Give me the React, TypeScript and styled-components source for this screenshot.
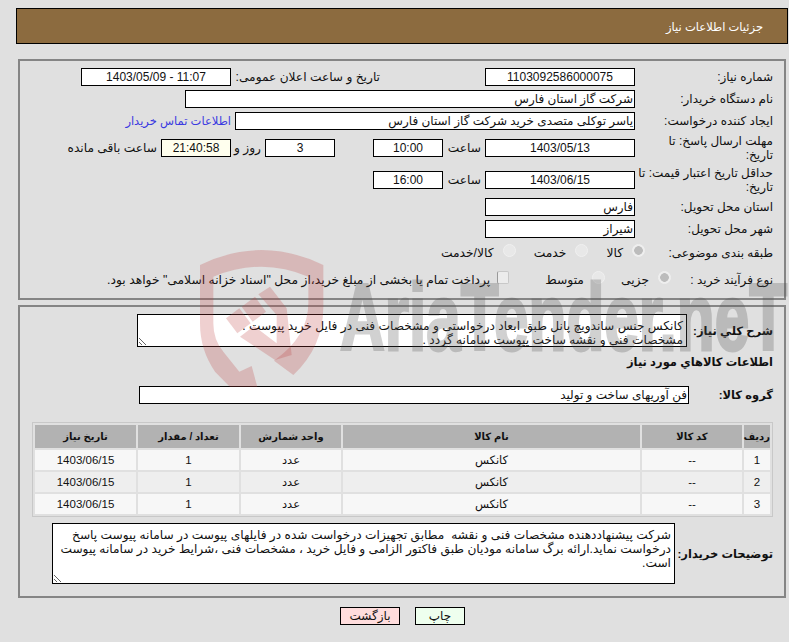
import styled, { createGlobalStyle } from "styled-components";

const GlobalStyle = createGlobalStyle`
  html, body {
    margin: 0;
    padding: 0;
    background: #e0e0e0;
    overflow: hidden;
  }
  body {
    font-family: "Liberation Sans", "DejaVu Sans", sans-serif;
    font-size: 12px;
    color: #111;
  }
`;

const Page = styled.div`
  position: relative;
  width: 789px;
  height: 642px;
  box-sizing: border-box;
  padding: 8px 1px 0 16px;
  overflow: hidden;
  direction: rtl;
`;
const TitleBar = styled.div`
  height: 36px;
  box-sizing: border-box;
  border: 1px solid #000;
  background: #8c6b3f;
  color: #fff;
  font-size: 11.5px;
  line-height: 36px;
  padding-right: 24px;
`;
const Panel = styled.section<{ $top: number; $h: number }>`
  margin: ${(p) => p.$top}px 2px 0;
  height: ${(p) => p.$h}px;
  box-sizing: border-box;
  border: 2px solid #858585;
  padding: 7px 11px 0 0;
`;
const Row = styled.div<{ $h?: number; $top?: number }>`
  display: flex;
  align-items: center;
  height: ${(p) => p.$h ?? 18}px;
  margin-top: ${(p) => p.$top ?? 4}px;
`;
const Label = styled.div<{ $w: number; $bold?: boolean }>`
  width: ${(p) => p.$w}px;
  flex: none;
  line-height: 14px;
  font-size: ${(p) => (p.$bold ? 11.5 : 12)}px;
  font-weight: ${(p) => (p.$bold ? 700 : 400)};
`;
const Field = styled.div<{ $w: number; $center?: boolean; $tint?: boolean; $mr?: number }>`
  width: ${(p) => p.$w}px;
  height: 18px;
  flex: none;
  box-sizing: border-box;
  border: 1px solid #000;
  background: ${(p) => (p.$tint ? "#ffffee" : "#fff")};
  margin-right: ${(p) => p.$mr ?? 0}px;
  padding: 0 1px;
  line-height: 16px;
  font-size: 12px;
  direction: ${(p) => (p.$center ? "ltr" : "rtl")};
  text-align: ${(p) => (p.$center ? "center" : "right")};
`;
const Caption = styled.div<{ $w?: number; $mr?: number }>`
  width: ${(p) => (p.$w ? `${p.$w}px` : "auto")};
  flex: none;
  box-sizing: border-box;
  margin-right: ${(p) => p.$mr ?? 0}px;
  padding-right: 4px;
  font-size: 12.2px;
  white-space: nowrap;
`;
const BuyerLink = styled.a`
  padding-right: 4px;
  font-size: 11.5px;
  color: #3a3ae0;
  text-decoration: none;
`;
const Options = styled.div<{ $gap?: number }>`
  display: flex;
  align-items: center;
  gap: ${(p) => p.$gap ?? 18}px;
`;
const Option = styled.label<{ $gap?: number; $after?: number }>`
  display: flex;
  align-items: center;
  gap: ${(p) => p.$gap ?? 9}px;
  margin-left: ${(p) => p.$after ?? 0}px;
  font-size: 12.3px;
  white-space: nowrap;
`;
const Radio = styled.input.attrs({ type: "radio", disabled: true })`
  appearance: none;
  width: 13px;
  height: 13px;
  margin: -5px 0 0;
  border: 1px solid #f0f0f0;
  border-radius: 50%;
  background: #e8e8e8;
  &:checked {
    background: radial-gradient(circle, #bcbcbc 0 4px, #eeeeee 4.6px);
  }
`;
const Check = styled.input.attrs({ type: "checkbox", disabled: true })`
  appearance: none;
  width: 12px;
  height: 13px;
  margin: -6px 0 0;
  border: 1px solid #c8c8c8;
  border-left-color: #999;
  border-radius: 2px;
  background: #ececec;
`;
const Note = styled.textarea<{ $w: number; $h: number }>`
  width: ${(p) => p.$w}px;
  height: ${(p) => p.$h}px;
  flex: none;
  box-sizing: border-box;
  border: 1px solid #000;
  border-radius: 0;
  outline: none;
  background: #fff;
  margin: 0;
  padding: 4px 3px 0 0;
  font-family: inherit;
  font-size: 12.2px;
  line-height: 14px;
  color: #111;
  overflow: hidden;
  resize: both;
`;
const ItemsTable = styled.table`
  margin-top: 18px;
  width: 741px;
  table-layout: fixed;
  border: 1px solid #c8c8c8;
  border-spacing: 2px;
`;
const HeadCell = styled.th<{ $w: number }>`
  width: ${(p) => p.$w}px;
  height: 23px;
  padding: 0;
  background: #b2b2b2;
  font-size: 10px;
  color: #111;
`;
const Cell = styled.td<{ $alt: boolean }>`
  height: 20px;
  padding: 0;
  text-align: center;
  font-size: 11.5px;
  background: ${(p) => (p.$alt ? "#eeeeee" : "#f7f7f7")};
`;
const Actions = styled.div`
  display: flex;
  justify-content: center;
  gap: 15px;
  margin: 9px 3px 0 4px;
`;
const ActionButton = styled.button<{ $bg: string; $w: number }>`
  width: ${(p) => p.$w}px;
  height: 18px;
  box-sizing: border-box;
  border: 1px solid #000;
  padding: 0;
  background: ${(p) => p.$bg};
  font-family: inherit;
  font-size: 12px;
  line-height: 16px;
  color: #111;
`;
const WatermarkText = styled.div`
  position: absolute;
  left: 340px;
  top: 271px;
  direction: ltr;
  font-size: 94px;
  line-height: 94px;
  font-weight: 700;
  white-space: nowrap;
  color: #505050;
  -webkit-text-stroke: 3px #505050;
  opacity: 0.26;
  transform: scaleX(0.66);
  transform-origin: left top;
  pointer-events: none;
`;
const WatermarkShield = styled.svg`
  position: absolute;
  left: 180px;
  top: 240px;
  width: 160px;
  height: 147px;
  pointer-events: none;
`;

const items = [1, 2, 3];

function Shield() {
  return (
    <WatermarkShield viewBox="0 0 480 441" fill="rgba(190, 60, 60, 0.24)">
      <path d="M60 75 Q245 -15 430 75 L430 200 Q430 320 340 405 L282 362 Q385 290 385 190 L385 110 Q245 50 100 110 L100 250 Q100 300 130 335 L178 395 L215 378 L232 441 L150 441 L105 395 Q60 330 60 250 Z" />
      <path d="M138 235 L178 205 L212 250 L172 280 Z" />
      <path d="M185 200 L225 170 L258 215 L218 245 Z" />
      <path d="M235 163 L270 140 L320 205 L335 345 L285 360 L180 290 L222 258 L290 310 L290 225 Z" />
    </WatermarkShield>
  );
}

export default function App() {
  return (
    <>
      <GlobalStyle />
      <Page>
        <TitleBar>جزئیات اطلاعات نیاز</TitleBar>

        <Panel $top={15} $h={241}>
          <Row $top={0}>
            <Label $w={138}>شماره نیاز:</Label>
            <Field $w={150} $center>1103092586000075</Field>
            <Caption $w={153} $mr={101}>تاریخ و ساعت اعلان عمومی:</Caption>
            <Field $w={150} $center>1403/05/09 - 11:07</Field>
          </Row>
          <Row>
            <Label $w={138}>نام دستگاه خریدار:</Label>
            <Field $w={450}>شرکت گاز استان فارس</Field>
          </Row>
          <Row>
            <Label $w={138}>ایجاد کننده درخواست:</Label>
            <Field $w={400}>یاسر توکلی متصدی خرید شرکت گاز استان فارس</Field>
            <BuyerLink>اطلاعات تماس خریدار</BuyerLink>
          </Row>
          <Row $h={28}>
            <Label $w={138}>مهلت ارسال پاسخ: تا<br />تاریخ:</Label>
            <Field $w={150} $center>1403/05/13</Field>
            <Caption $w={42}>ساعت</Caption>
            <Field $w={70} $center>10:00</Field>
            <Field $w={70} $center $mr={38}>3</Field>
            <Caption $w={34}>روز و</Caption>
            <Field $w={70} $center $tint>21:40:58</Field>
            <Caption>ساعت باقی مانده</Caption>
          </Row>
          <Row $h={28}>
            <Label $w={138}>حداقل تاریخ اعتبار قیمت: تا<br />تاریخ:</Label>
            <Field $w={150} $center>1403/06/15</Field>
            <Caption $w={42}>ساعت</Caption>
            <Field $w={70} $center>16:00</Field>
          </Row>
          <Row>
            <Label $w={138}>استان محل تحویل:</Label>
            <Field $w={150}>فارس</Field>
          </Row>
          <Row>
            <Label $w={138}>شهر محل تحویل:</Label>
            <Field $w={150}>شیراز</Field>
          </Row>
          <Row $h={22}>
            <Label $w={128}>طبقه بندی موضوعی:</Label>
            <Options>
              <Option><Radio checked readOnly />کالا</Option>
              <Option><Radio />خدمت</Option>
              <Option><Radio />کالا/خدمت</Option>
            </Options>
          </Row>
          <Row $h={22} $top={5}>
            <Label $w={102}>نوع فرآیند خرید :</Label>
            <Options $gap={16}>
              <Option><Radio checked readOnly />جزیی</Option>
              <Option $gap={8} $after={20}><Radio />متوسط</Option>
              <Option $gap={7}><Check />پرداخت تمام یا بخشی از مبلغ خرید،از محل "اسناد خزانه اسلامی" خواهد بود.</Option>
            </Options>
          </Row>
        </Panel>

        <Panel $top={5} $h={293}>
          <Row $h={33} $top={0}>
            <Label $w={86} $bold>شرح کلي نیاز:</Label>
            <Note
              $w={550}
              $h={33}
              readOnly
              defaultValue={"کانکس جنس ساندویچ پانل طبق ابعاد درخواستی و مشخصات فنی در فایل خرید پیوست .\nمشخصات فنی و نقشه ساخت پیوست سامانه گردد ."}
            />
          </Row>
          <Row $top={6}>
            <Label $w={300} $bold>اطلاعات کالاهاي مورد نیاز</Label>
          </Row>
          <Row $top={15}>
            <Label $w={84} $bold>گروه کالا:</Label>
            <Field $w={550}>فن آوریهای ساخت و تولید</Field>
          </Row>
          <ItemsTable>
            <thead>
              <tr>
                <HeadCell $w={26}>ردیف</HeadCell>
                <HeadCell $w={100}>کد کالا</HeadCell>
                <HeadCell $w={297}>نام کالا</HeadCell>
                <HeadCell $w={100}>واحد شمارش</HeadCell>
                <HeadCell $w={101}>تعداد / مقدار</HeadCell>
                <HeadCell $w={101}>تاریخ نیاز</HeadCell>
              </tr>
            </thead>
            <tbody>
              {items.map((n) => (
                <tr key={n}>
                  <Cell $alt={n === 2}>{n}</Cell>
                  <Cell $alt={n === 2}>--</Cell>
                  <Cell $alt={n === 2}>کانکس</Cell>
                  <Cell $alt={n === 2}>عدد</Cell>
                  <Cell $alt={n === 2}>1</Cell>
                  <Cell $alt={n === 2}>1403/06/15</Cell>
                </tr>
              ))}
            </tbody>
          </ItemsTable>
          <Row $h={61} $top={6}>
            <Label $w={98} $bold>توضیحات خریدار:</Label>
            <Note
              $w={623}
              $h={61}
              readOnly
              defaultValue={"شرکت پیشنهاددهنده مشخصات فنی و نقشه  مطابق تجهیزات درخواست شده در فایلهای پیوست در سامانه پیوست پاسخ\nدرخواست نماید.ارائه برگ سامانه مودیان طبق فاکتور الزامی و فایل خرید ، مشخصات فنی ،شرایط خرید در سامانه پیوست\nاست."}
            />
          </Row>
        </Panel>

        <Actions>
          <ActionButton $bg="#eeffee" $w={50}>چاپ</ActionButton>
          <ActionButton $bg="#ffdddd" $w={60}>بازگشت</ActionButton>
        </Actions>

        <Shield />
        <WatermarkText>AriaTender.neT</WatermarkText>
      </Page>
    </>
  );
}
